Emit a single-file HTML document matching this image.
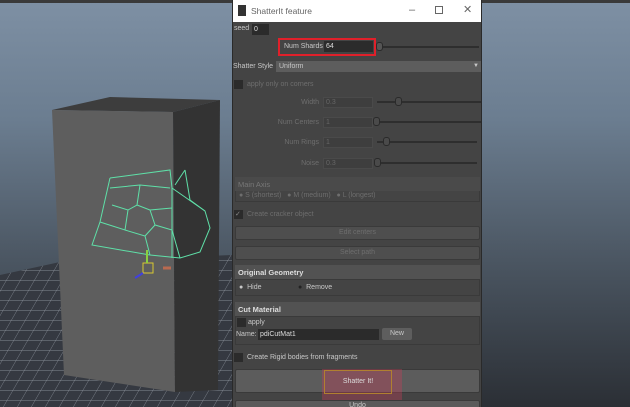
<!DOCTYPE html>
<html><head><style>
*{margin:0;padding:0;box-sizing:border-box}
html,body{width:630px;height:407px;overflow:hidden}
body{position:relative;font-family:"Liberation Sans",sans-serif;font-size:7px;color:#c8c8c8;background:linear-gradient(#7e90a4 0px,#6b7d90 120px,#4b5662 260px,#2b2f35 407px)}
.a{position:absolute;white-space:nowrap}
.dlg{left:232px;top:0;width:250px;height:407px;background:#444;border-left:1px solid #2a2a2a;border-right:1px solid #2a2a2a;overflow:hidden}
.in{background:#2b2b2b;position:absolute;height:11px;line-height:11px}
.dim{color:#6e6e6e}
.btn{position:absolute;left:2px;width:245px;background:#5a5a5a;border:1px solid #3a3a3a;text-align:center;border-radius:2px}
.hdr{position:absolute;left:2px;width:245px;background:#525252;height:14px;font-weight:bold;color:#ddd;padding:3px 3px;font-size:7.5px}
.frm{position:absolute;left:2px;width:245px;border:1px solid #3a3a3a}
.trk{position:absolute;height:2px;background:#2e2e2e}
.hdl{position:absolute;width:7px;height:9px;background:#555;border:1px solid #2a2a2a;border-radius:3px}
.cb{position:absolute;width:9px;height:9px;background:#2b2b2b}
</style></head><body>
<div class="a" style="left:0;top:0;width:630px;height:3px;background:#3a3a3a"></div>
<svg class="a" style="left:0;top:0" width="232" height="407">
<defs><pattern id="g" width="14" height="10" patternUnits="userSpaceOnUse" patternTransform="skewX(-30)"><rect width="14" height="10" fill="#353941"/><path d="M0 0H14M0 0V10" stroke="#8d939c" stroke-width="0.8"/></pattern></defs>
<polygon points="0,275 60,262 232,255 232,407 0,407" fill="url(#g)"/>
<polygon points="52,110 110,97 220,100 173,112" fill="#3d3d3d"/>
<polygon points="52,110 173,112 175,392 64,375" fill="#5e5e5e"/>
<polygon points="173,112 220,100 218,390 175,392" fill="#333"/>
<g stroke="#5fe0a8" stroke-width="1" fill="none">
<path d="M110,178 L170,170 L172,188 L205,211 L210,228 L200,252 L180,258 L150,255 L92,245 L100,222 L110,178"/>
<path d="M110,188 L140,185 L170,188 M140,185 L137,205 L128,210 L112,205 M128,210 L125,230 L100,222 M125,230 L145,236 L150,255 M145,236 L155,225 L172,230 L180,258 M155,225 L150,210 L137,205 M150,210 L172,208 M172,188 L172,258 M185,170 L190,200 L205,211 M185,170 L175,185"/>
</g>
<rect x="143" y="263" width="10" height="10" fill="none" stroke="#d8c830"/>
<path d="M147,263 V250" stroke="#8ad040" stroke-width="2"/>
<path d="M143,273 l-8,5" stroke="#4040e0" stroke-width="2"/>
<path d="M163,268 h8" stroke="#b86a50" stroke-width="3"/>
</svg>
<div class="a dlg">
<div class="a" style="left:0;top:0;width:249px;height:22px;background:#fff;color:#666;font-size:8.5px">
<div class="a" style="left:5px;top:5px;width:8px;height:11px;background:#333"></div>
<div class="a" style="left:18px;top:6px">ShatterIt feature</div>
<div class="a" style="left:176px;top:4px;font-size:11px">–</div>
<div class="a" style="left:202px;top:6px;width:8px;height:8px;border:1px solid #666"></div>
<div class="a" style="left:230px;top:3px;font-size:11px">✕</div></div>
<div class="a" style="left:1px;top:25px">seed</div><div class="in" style="left:19px;top:24px;width:17px;color:#ddd;padding-left:2px">0</div>
<div class="a" style="left:45px;top:38px;width:98px;height:18px;border:2px solid #e0202a"></div>
<div class="a" style="left:51px;top:43px">Num Shards</div><div class="in" style="left:91px;top:41px;width:49px;color:#ddd;padding-left:2px">64</div>
<div class="trk" style="left:146px;top:46px;width:100px"></div><div class="hdl" style="left:143px;top:42px"></div>
<div class="a" style="left:0;top:63px">Shatter Style</div>
<div class="a" style="left:43px;top:61px;width:205px;height:11px;line-height:11px;background:#5d5d5d;padding-left:3px">Uniform<span style="position:absolute;right:2px;top:0;font-size:6px">▼</span></div>
<div class="cb" style="left:1px;top:80px"></div><div class="a dim" style="left:14px;top:81px">apply only on corners</div>
<div class="a dim" style="right:162px;top:99px">Width</div><div class="in" style="left:90px;top:97px;width:50px;background:#3e3e3e;border:1px solid #4a4a4a;color:#666;padding-left:2px;line-height:9px">0.3</div><div class="trk" style="left:144px;top:101px;width:104px"></div><div class="hdl" style="left:162px;top:97px;background:#4a4a4a"></div>
<div class="a dim" style="right:162px;top:119px">Num Centers</div><div class="in" style="left:90px;top:117px;width:50px;background:#3e3e3e;border:1px solid #4a4a4a;color:#666;padding-left:2px;line-height:9px">1</div><div class="trk" style="left:144px;top:121px;width:104px"></div><div class="hdl" style="left:140px;top:117px;background:#4a4a4a"></div>
<div class="a dim" style="right:162px;top:139px">Num Rings</div><div class="in" style="left:90px;top:137px;width:50px;background:#3e3e3e;border:1px solid #4a4a4a;color:#666;padding-left:2px;line-height:9px">1</div><div class="trk" style="left:144px;top:141px;width:100px"></div><div class="hdl" style="left:150px;top:137px;background:#4a4a4a"></div>
<div class="a dim" style="right:162px;top:160px">Noise</div><div class="in" style="left:90px;top:158px;width:50px;background:#3e3e3e;border:1px solid #4a4a4a;color:#666;padding-left:2px;line-height:9px">0.3</div><div class="trk" style="left:144px;top:162px;width:100px"></div><div class="hdl" style="left:141px;top:158px;background:#4a4a4a"></div>
<div class="hdr" style="top:177px;font-weight:normal;color:#777;background:#4a4a4a">Main Axis</div>
<div class="frm" style="top:191px;height:11px;border-top:none"><span class="a dim" style="left:3px;top:1px">● S (shortest) &nbsp; ● M (medium) &nbsp; ● L (longest)</span></div>
<div class="cb" style="left:1px;top:210px"><span style="position:absolute;left:1px;top:0;color:#888;font-size:7px">✓</span></div><div class="a dim" style="left:14px;top:211px">Create cracker object</div>
<div class="btn dim" style="top:226px;height:14px;line-height:12px;background:#4e4e4e">Edit centers</div>
<div class="btn dim" style="top:246px;height:14px;line-height:12px;background:#4e4e4e">Select path</div>
<div class="hdr" style="top:265px">Original Geometry</div>
<div class="frm" style="top:279px;height:17px"><span class="a" style="left:3px;top:4px">● &nbsp;Hide</span><span class="a" style="left:62px;top:4px"><span style="color:#222">●</span> &nbsp;Remove</span></div>
<div class="hdr" style="top:302px">Cut Material</div>
<div class="frm" style="top:316px;height:29px"></div>
<div class="cb" style="left:4px;top:318px"></div><div class="a" style="left:15px;top:319px">apply</div>
<div class="a" style="left:3px;top:331px">Name:</div><div class="in" style="left:25px;top:329px;width:121px;color:#ddd;padding-left:2px">pdiCutMat1</div>
<div class="a" style="left:149px;top:328px;width:30px;height:12px;background:#5e5e5e;text-align:center;line-height:12px;border-radius:2px">New</div>
<div class="cb" style="left:1px;top:353px"></div><div class="a" style="left:14px;top:354px">Create Rigid bodies from fragments</div>
<div class="btn" style="top:369px;height:24px;background:#5c5c5c"></div>
<div class="a" style="left:89px;top:369px;width:80px;height:31px;background:rgba(200,60,90,0.35)"></div>
<div class="a" style="left:91px;top:370px;width:68px;height:24px;border:1px solid #b08030;text-align:center;line-height:22px;color:#ddd">Shatter It!</div>
<div class="btn" style="top:400px;height:12px;line-height:10px">Undo</div>
</div>
</body></html>
